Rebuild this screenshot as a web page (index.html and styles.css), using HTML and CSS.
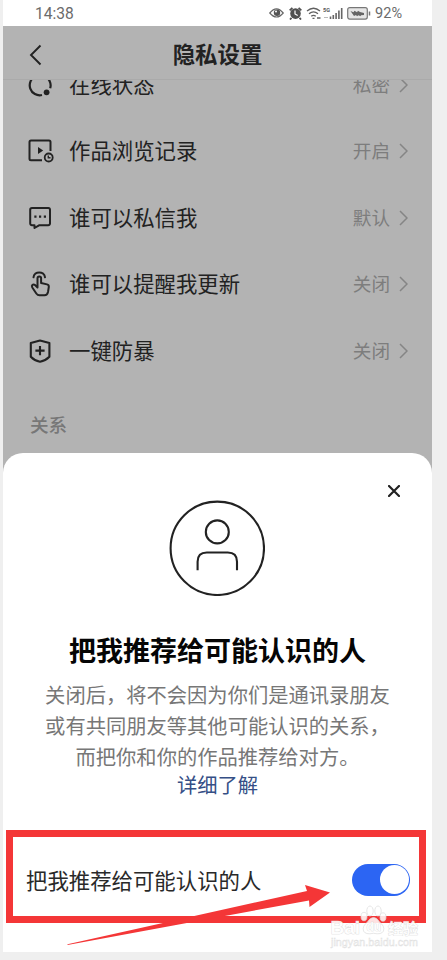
FILE: index.html
```html
<!DOCTYPE html>
<html lang="zh-CN">
<head>
<meta charset="utf-8">
<title>隐私设置</title>
<link rel="stylesheet" href="styles.css">
</head>
<body>
<main class="phone">
  <div class="status">
    <span class="time">14:38</span>
    <div class="status-icons">
      <svg class="eye" width="15" height="12" viewBox="0 0 15 12"><path d="M.8 6Q7.5-2.200 14.200 6Q7.500 14 .8 6Z" fill="none" stroke="#666" stroke-width="1.2"/><circle cx="8" cy="5.700" r="3.200" fill="#555"/><circle cx="7" cy="4.500" r="1" fill="#fff"/></svg>
      <svg class="alarm" width="13" height="13" viewBox="0 0 13 13"><circle cx="6.500" cy="6.600" r="5.300" fill="#505050"/><path d="M.7 3.400 3.400.8M12.300 3.400 9.600.8M2.500 10.800 1 12.500M10.500 10.800l1.500 1.700" stroke="#505050" stroke-width="1.800"/><path d="M6 3.500v3.500l2.700 1.500" fill="none" stroke="#fff" stroke-width="1.200"/></svg>
      <svg class="wifi" width="16" height="13" viewBox="0 0 16 13" fill="none" stroke="#606060" stroke-width="1.300"><path d="M1 4Q7.500-1.500 14 4M3 6.800q4.500-3.700 9 0M5.200 9.300q2.300-1.800 4.600 0"/><path d="M6.500 11.300h2M11 11h3.500"/></svg>
      <svg class="signal" width="20" height="13" viewBox="0 0 20 13"><text x="0" y="5" class="net">5G</text><path d="M1 10.500h4" stroke="#bbb"/><path d="M7.500 12V9.500M10.300 12V8M13.100 12V6M15.900 12V3.500M18.700 12V1" stroke="#666" stroke-width="1.600"/></svg>
      <svg class="battery" width="24" height="13" viewBox="0 0 24 13"><rect x=".7" y=".7" width="19.600" height="11.400" rx="2" fill="#e6e6e6" stroke="#777" stroke-width="1.200"/><path d="m3.500 4 3 1.200 1-1.500 2.500 1.500 1-1.500 2 1.300 4 1v2l-3 .3-.5 1-2-1-1.500 1-1-1.300-2 1Z" fill="#666"/><path d="M22.500 4.500v4" stroke="#777" stroke-width="1.500"/></svg>
      <span class="percent">92%</span>
    </div>
  </div>

  <header class="nav">
    <svg class="back" width="13" height="22" viewBox="0 0 13 22"><path d="M11.500 1.500 2 11l9.500 9.500" fill="none" stroke="#222" stroke-width="1.900"/></svg>
    <h1>隐私设置</h1>
  </header>

  <section class="settings">
    <div class="row first">
      <svg class="icon" viewBox="0 0 28 28"><path d="M9.500 5.200A10 10 0 0 0 16 24M18.500 5.200A10 10 0 0 1 24.200 17.300" fill="none" stroke="#222" stroke-width="2.200"/><circle cx="20.600" cy="21.300" r="2.900" fill="#222"/></svg>
      <span class="label">在线状态</span><span class="value">私密</span>
      <svg class="chevron" viewBox="0 0 9 16"><path d="m1 1 7 7-7 7"/></svg>
    </div>
    <div class="row">
      <svg class="icon" viewBox="0 0 28 28" fill="none" stroke="#222" stroke-width="2"><path d="M16 23.200H5A1.500 1.500 0 0 1 3.500 21.700V5A1.500 1.500 0 0 1 5 3.500H23A1.500 1.500 0 0 1 24.500 5V14"/><path d="m12 10 5.200 3.500-5.200 3.500Z" fill="#222" stroke="none"/><circle cx="22.700" cy="20.500" r="4" stroke-width="1.800"/><path d="M22.300 18.500v2.300h2.200" stroke-width="1.400"/></svg>
      <span class="label">作品浏览记录</span><span class="value">开启</span>
      <svg class="chevron" viewBox="0 0 9 16"><path d="m1 1 7 7-7 7"/></svg>
    </div>
    <div class="row">
      <svg class="icon" viewBox="0 0 28 28" fill="none" stroke="#222" stroke-width="2" stroke-linejoin="round"><path d="M6 4H22.300A1.800 1.800 0 0 1 24 5.800V19.500A1.800 1.800 0 0 1 22.200 21.300H13L8.500 24V21.300H6A1.800 1.800 0 0 1 4.200 19.500V5.800A1.800 1.800 0 0 1 6 4Z"/><path d="M8.300 12.700h2.200M13 12.700h2.200M17.800 12.700H20" stroke-width="2.200"/></svg>
      <span class="label">谁可以私信我</span><span class="value">默认</span>
      <svg class="chevron" viewBox="0 0 9 16"><path d="m1 1 7 7-7 7"/></svg>
    </div>
    <div class="row">
      <svg class="icon" viewBox="0 0 28 28" fill="none" stroke="#222" stroke-width="2" stroke-linecap="round" stroke-linejoin="round"><path d="M7.500 7.300C8 .8 18.500 .8 19 7.300"/><path d="M11.500 17V8.300C11.500 5.900 15.100 5.900 15.100 8.300V13L21 14.400C22.500 14.800 23 15.600 22.800 17L22 22Q21.300 25.300 18.500 25.300H13.500Q11.600 25.300 10.300 23.500L6.300 17.500C5 15.200 7.300 13.600 9 15L11.500 17.500"/></svg>
      <span class="label">谁可以提醒我更新</span><span class="value">关闭</span>
      <svg class="chevron" viewBox="0 0 9 16"><path d="m1 1 7 7-7 7"/></svg>
    </div>
    <div class="row">
      <svg class="icon" viewBox="0 0 28 28" fill="none" stroke="#222" stroke-width="2.100" stroke-linejoin="round"><path d="M14 3.500 23.400 6V19.800Q19.500 23.700 14 24.800Q8.500 23.700 4.800 19.800V6Z"/><path d="M14 9v9.200M9.400 13.600h9.200"/></svg>
      <span class="label">一键防暴</span><span class="value">关闭</span>
      <svg class="chevron" viewBox="0 0 9 16"><path d="m1 1 7 7-7 7"/></svg>
    </div>
    <h2>关系</h2>
  </section>

  <section class="sheet">
    <div class="close-line">
      <svg width="12" height="12" viewBox="0 0 12 12"><path d="m1 1 10 10M11 1 1 11" stroke="#222" stroke-width="2.200" stroke-linecap="round"/></svg>
    </div>
    <svg class="avatar" width="96" height="96" viewBox="0 0 96 96" fill="none" stroke="#222" stroke-width="2.100"><circle cx="48.300" cy="48.300" r="46.700"/><circle cx="48.300" cy="31.900" r="11.500"/><path d="M28.600 70.200V61.700Q28.600 52.500 37.800 52.500H58.800Q68 52.500 68 61.700V70.200"/></svg>
    <h3>把我推荐给可能认识的人</h3>
    <p>关闭后，将不会因为你们是通讯录朋友<br>或有共同朋友等其他可能认识的关系，<br>而把你和你的作品推荐给对方。</p>
    <a class="more">详细了解</a>
    <div class="switch-row">
      <span class="switch-label">把我推荐给可能认识的人</span>
      <span class="toggle"><i></i></span>
    </div>
  </section>

  <svg class="arrow" width="270" height="64" viewBox="0 0 270 64"><path d="M1.500 61.200 241 8 239 2 264 9.500 243.500 24 243 17.500 1.500 61.900Z" fill="#f43637"/></svg>
  <div class="watermark">
    <svg width="100" height="52" viewBox="0 0 100 52">
      <g class="paw"><ellipse cx="36" cy="16.500" rx="3" ry="4.200"/><ellipse cx="42" cy="11" rx="3.200" ry="5"/><ellipse cx="50" cy="11" rx="3.200" ry="5"/><ellipse cx="55" cy="17" rx="3" ry="4.200"/><path d="M45.500 17.500Q49 17.500 51.500 22Q57 26 55.500 31Q53.500 35 45.500 33.300Q37.500 35 35.500 31Q34 26 39.500 22Q42 17.500 45.500 17.500Z"/></g>
      <text x="2.500" y="34" class="bai" textLength="29.500" lengthAdjust="spacingAndGlyphs">Bai</text><text x="38.500" y="31" class="du">du</text><text x="60" y="33.500" class="jy">经验</text><text x="3" y="46" class="url" textLength="87">jingyan.baidu.com</text>
    </svg>
  </div>
</main>
</body>
</html>
```
FILE: styles.css
```css
* { box-sizing: border-box; }
body {
  margin: 0;
  background: #efefef;
  font-family: "Noto Sans CJK SC", sans-serif;
  color: #222;
}
h1, h2, h3, p { margin: 0; }
svg { display: block; flex: none; }
.phone {
  position: relative;
  width: 429px;
  height: 952px;
  margin-left: 3px;
  background: #b3b3b3;
  overflow: hidden;
}
.status {
  height: 26px;
  padding: 0 30px 0 32px;
  background: #fff;
  display: flex;
  align-items: center;
  justify-content: space-between;
  font: 15.600px/26px Roboto, sans-serif;
  color: #6b6b6b;
}
.time { padding-top: 1px; }
.status-icons { display: flex; align-items: center; }
.alarm { margin-left: 5px; }
.wifi { margin-left: 4px; }
.signal { margin-left: 1px; }
.battery { margin-left: 4px; }
.percent { margin-left: 4px; padding-top: 1px; font-size: 14.500px; }
.net { font: bold 5.500px Roboto, sans-serif; fill: #555; }
.nav {
  height: 54px;
  border-bottom: 1px solid #aaa;
  display: grid;
  grid-template-columns: 60px 1fr 60px;
  align-items: center;
}
.back { margin: 5px 0 0 26px; }
.nav h1 { padding-top: 1px; text-align: center; font-size: 22.400px; line-height: 50px; font-weight: 700; }
.settings { height: 373px; overflow: hidden; }
.row {
  height: 66.700px;
  padding: 0 24px 0 23px;
  display: flex;
  align-items: center;
}
.row.first { height: 65.500px; margin-top: -28px; }
.icon { width: 28px; height: 28px; }
.label { flex: 1; margin-left: 15px; font-size: 21.400px; line-height: 32px; margin-top: -2px; }
.value { font-size: 18.600px; line-height: 28px; margin-top: -2px; color: #7d7d7d; }
.chevron { width: 9px; height: 16px; margin-left: 9px; fill: none; stroke: #858585; stroke-width: 1.500; }
.settings h2 {
  margin: 26px 0 0 27px;
  font-size: 18.600px;
  line-height: 28px;
  font-weight: 500;
  color: #777;
}
.sheet {
  height: 499px;
  background: #fff;
  border-radius: 20px 20px 0 0;
  display: flex;
  flex-direction: column;
  align-items: center;
}
.close-line {
  width: 100%;
  height: 47px;
  padding: 32px 32px 0 0;
  display: flex;
  justify-content: flex-end;
}
.avatar { margin-right: 1px; }
.sheet h3 { margin-top: 34px; font-size: 27px; line-height: 40px; font-weight: 700; color: #050505; }
.sheet p { margin-top: 9px; font-size: 20.300px; line-height: 31.200px; color: #777; text-align: center; white-space: nowrap; }
.more { margin-top: -4px; font-size: 20.300px; line-height: 30px; color: #354f86; }
.switch-row {
  width: 420px;
  height: 93px;
  margin: 31px 0 0 -3px;
  padding: 0 9px 0 13px;
  border: 7px solid #f43637;
  display: flex;
  align-items: center;
  justify-content: space-between;
  font-size: 21.400px;
  line-height: 32px;
  color: #292929;
}
.switch-label { margin-top: 7px; }
.toggle {
  width: 58px;
  height: 32px;
  margin-top: 7px;
  padding: 1.500px;
  border-radius: 16px;
  background: #2c65f3;
  display: flex;
  justify-content: flex-end;
}
.toggle i { width: 29px; height: 29px; border-radius: 50%; background: #fff; }
.arrow { position: absolute; left: 63px; top: 883px; }
.watermark { position: absolute; left: 325px; top: 900px; }
.paw { fill: #fff; fill-opacity: .85; stroke: #ddd; stroke-width: .7; }
.bai, .du, .jy { fill: #fff; fill-opacity: .9; stroke: #d4d4d4; stroke-width: .6; paint-order: stroke; }
.bai { font: bold 19px "Liberation Sans", sans-serif; }
.du { font: bold 12px "Liberation Sans", sans-serif; }
.jy { font: bold 15px "Noto Sans CJK SC", sans-serif; }
.url { font: 10.700px "Liberation Sans", sans-serif; fill: #f6f6f6; stroke: #dedede; stroke-width: .4; }
```
